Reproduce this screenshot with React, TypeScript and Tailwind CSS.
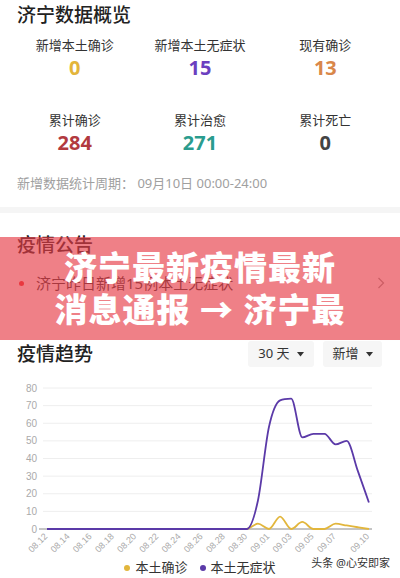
import React from "react";

const font = { fontFamily: '"Noto Sans", "Noto Sans CJK SC", sans-serif' };

const stats = [
  { label: "新增本土确诊", value: "0", color: "text-[#e3b53a]" },
  { label: "新增本土无症状", value: "15", color: "text-[#6b3fc0]" },
  { label: "现有确诊", value: "13", color: "text-[#d9874a]" },
  { label: "累计确诊", value: "284", color: "text-[#b23a3f]" },
  { label: "累计治愈", value: "271", color: "text-[#2a9c8e]" },
  { label: "累计死亡", value: "0", color: "text-[#444444]" },
];

const dates = [
  "08.12", "08.13", "08.14", "08.15", "08.16", "08.17", "08.18", "08.19", "08.20", "08.21",
  "08.22", "08.23", "08.24", "08.25", "08.26", "08.27", "08.28", "08.29", "08.30", "08.31",
  "09.01", "09.02", "09.03", "09.04", "09.05", "09.06", "09.07", "09.08", "09.09", "09.10",
];

const purple = [
  0, 0, 0, 0, 0, 0, 0, 0, 0, 0, 0, 0, 0, 0, 0, 0, 0, 0, 0, 16, 58, 73, 74, 52, 54, 54, 48, 50, 33, 15,
];
const yellow = [
  0, 0, 0, 0, 0, 0, 0, 0, 0, 0, 0, 0, 0, 0, 0, 0, 0, 0, 0, 3, 0, 7, 0, 4, 0, 0, 3, 2, 1, 0,
];

const X0 = 47;
const STEP = 11.1;
const Y0 = 154;
const SCALE = 141 / 80;

const px = (i: number) => X0 + i * STEP;
const py = (v: number) => Y0 - v * SCALE;

// monotone cubic, so the curve never overshoots the data
function smoothPath(vals: number[]) {
  const n = vals.length;
  const d: number[] = [];
  for (let i = 0; i < n - 1; i++) d.push(vals[i + 1] - vals[i]);
  const m: number[] = [d[0]];
  for (let i = 1; i < n - 1; i++) {
    if (d[i - 1] * d[i] <= 0) m.push(0);
    else m.push((d[i - 1] + d[i]) / 2);
  }
  m.push(d[n - 2]);
  for (let i = 0; i < n - 1; i++) {
    if (d[i] === 0) {
      m[i] = 0;
      m[i + 1] = 0;
      continue;
    }
    const a = m[i] / d[i];
    const b = m[i + 1] / d[i];
    const s = a * a + b * b;
    if (s > 9) {
      const t = 3 / Math.sqrt(s);
      m[i] = t * a * d[i];
      m[i + 1] = t * b * d[i];
    }
  }
  let path = `M${px(0)},${py(vals[0])}`;
  for (let i = 0; i < n - 1; i++) {
    const x1 = px(i) + STEP / 3;
    const y1 = py(vals[i] + m[i] / 3);
    const x2 = px(i + 1) - STEP / 3;
    const y2 = py(vals[i + 1] - m[i + 1] / 3);
    path += ` C${x1},${y1} ${x2},${y2} ${px(i + 1)},${py(vals[i + 1])}`;
  }
  return path;
}

function Caret() {
  return (
    <svg width="7" height="5" viewBox="0 0 7 5" className="ml-[7px]">
      <path d="M0 0 L7 0 L3.5 4.5 Z" fill="#333" />
    </svg>
  );
}

function Chart() {
  const labelIdx = [0, 2, 4, 6, 8, 10, 12, 14, 16, 18, 20, 22, 24, 26, 29];
  return (
    <svg width="400" height="185" viewBox="0 0 400 185" className="block">
      {[10, 20, 30, 40, 50, 60, 70, 80].map((v) => (
        <line key={v} x1="43" x2="372" y1={py(v)} y2={py(v)} stroke="#eeeeee" strokeWidth="1" />
      ))}
      {[0, 10, 20, 30, 40, 50, 60, 70, 80].map((v) => (
        <text
          key={v}
          x="37"
          y={py(v) + 3.5}
          textAnchor="end"
          fontSize="10"
          fill="#aaaaaa"
          fontFamily="Liberation Sans, sans-serif"
        >
          {v}
        </text>
      ))}
      <line x1="39" x2="372" y1={Y0} y2={Y0} stroke="#8a8a8a" strokeWidth="1" />
      {labelIdx.map((i) => (
        <text
          key={i}
          x={px(i) + 1}
          y="162"
          textAnchor="end"
          fontSize="9"
          fill="#aaaaaa"
          fontFamily="Liberation Sans, sans-serif"
          transform={`rotate(-45 ${px(i) + 1} 162)`}
        >
          {dates[i]}
        </text>
      ))}
      <path d={smoothPath(yellow)} fill="none" stroke="#e2b63c" strokeWidth="1.8" />
      <path d={smoothPath(purple)} fill="none" stroke="#5b3aa8" strokeWidth="1.8" />
    </svg>
  );
}

export default function App() {
  return (
    <div className="relative w-[400px] h-[578px] overflow-hidden bg-white text-[#333]" style={font}>
      <section className="px-[17px] pt-[3px] pb-[15px]">
        <h2 className="text-[19px] leading-[24px] font-medium text-[#222]">济宁数据概览</h2>
        <div className="grid grid-cols-3 -mx-[5px] mt-[9px] gap-y-[31px]">
          {stats.map((s) => (
            <div key={s.label} className="flex flex-col items-center">
              <span className="text-[13px] leading-[18px] text-[#333]">{s.label}</span>
              <span className={`text-[20px] leading-[24px] font-bold mt-[2px] ${s.color}`}>{s.value}</span>
            </div>
          ))}
        </div>
        <p className="mt-[19px] text-[13px] leading-[18px] text-[#a0a0a0]">
          新增数据统计周期： 09月10日 00:00-24:00
        </p>
      </section>
      <div className="h-[6px] bg-[#f5f5f5]" />

      <section className="h-[121px] px-[17px] pt-[20px]">
        <h2 className="text-[19px] leading-[24px] font-medium text-[#222]">疫情公告</h2>
        <div className="flex items-center mt-[15px] h-[22px]">
          <span className="w-[5px] h-[5px] rounded-full bg-[#e33] ml-[2px]" />
          <span className="ml-[12px] text-[15px] leading-[22px] text-[#333] flex-1">济宁昨日新增15例本土无症状</span>
          <svg width="8" height="12" viewBox="0 0 8 12" className="mr-[-2px]">
            <path d="M1.5 1 L6.5 6 L1.5 11" fill="none" stroke="#999" strokeWidth="1.2" />
          </svg>
        </div>
      </section>

      <section className="pt-[7px]">
        <div className="flex items-center px-[17px] h-[26px]">
          <h2 className="text-[19px] leading-[24px] font-medium text-[#222] flex-1">疫情趋势</h2>
          <div className="flex items-center justify-center w-[66px] h-[26px] bg-[#f6f6f6] rounded-[3px] text-[13px] text-[#333]">
            30 天<Caret />
          </div>
          <div className="flex items-center justify-center w-[59px] h-[26px] bg-[#f6f6f6] rounded-[3px] text-[13px] text-[#333] ml-[9px] mr-[1px]">
            新增<Caret />
          </div>
        </div>
        <div className="mt-[8px]">
          <Chart />
        </div>
        <div className="flex items-center justify-center gap-[12px] h-[16px] text-[13px] text-[#333]">
          <div className="flex items-center gap-[5px]">
            <span className="w-[6px] h-[6px] rounded-full bg-[#e2b63c]" />
            本土确诊
          </div>
          <div className="flex items-center gap-[5px]">
            <span className="w-[6px] h-[6px] rounded-full bg-[#5b3aa8]" />
            本土无症状
          </div>
        </div>
      </section>

      <div className="absolute right-[10px] top-[555px] text-[11px] leading-[16px] text-[#333]">头条 @心安即家</div>

      <div className="absolute left-0 top-[237px] w-[400px] h-[103px] bg-[#e63c46]/65 flex flex-col items-center justify-center">
        <p className="text-white font-black text-[33px] leading-[42px] tracking-[1px] text-center">
          济宁最新疫情最新
          <br />
          消息通报 → 济宁最
        </p>
      </div>
    </div>
  );
}
